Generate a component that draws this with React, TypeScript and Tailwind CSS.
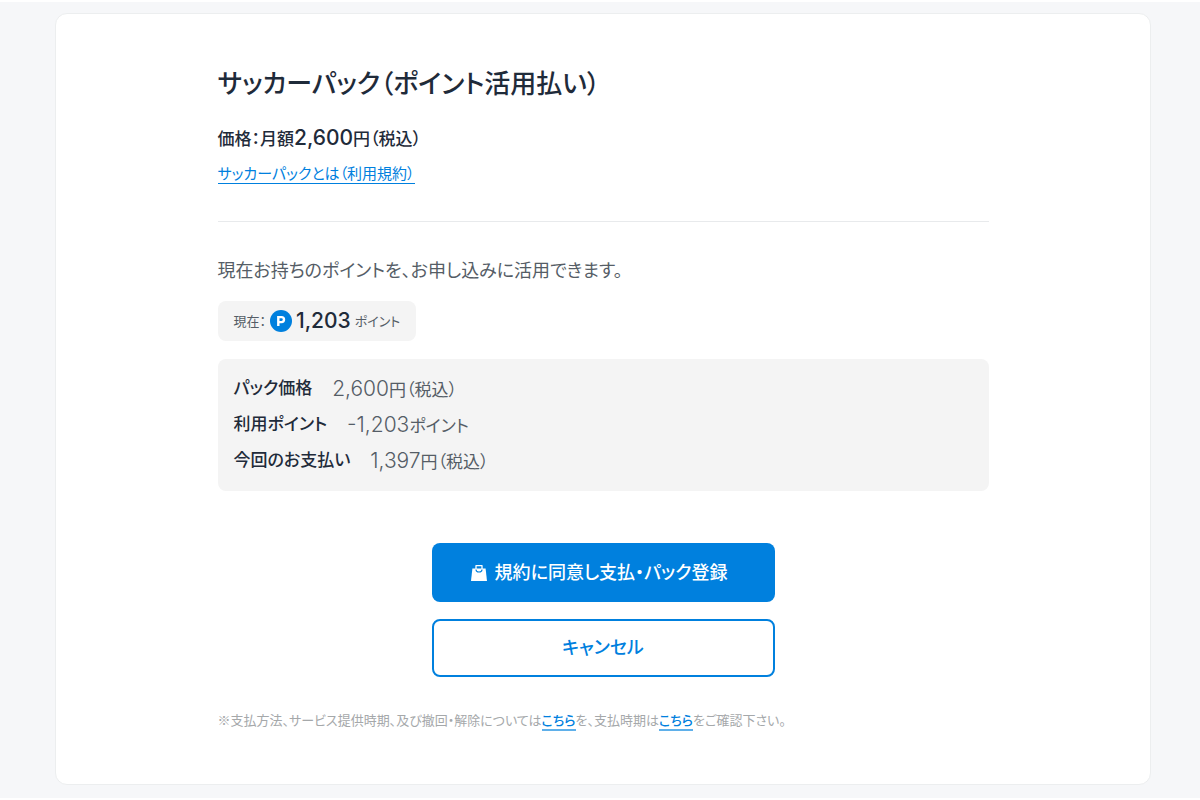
function ShoppingBagIcon() {
  return (
    <svg viewBox="0 0 16 18" className="mt-1 h-[18px] w-4" aria-hidden="true">
      <path
        d="M5 5V1.6h6V5"
        fill="none"
        stroke="#fff"
        strokeWidth="1.3"
        strokeLinejoin="round"
      />
      <path d="M1.4 4.6h13.2L16 17H0z" fill="#fff" />
      <path
        d="M5 5.4c0 1.6 1.1 2.6 3 2.6s3-1 3-2.6"
        fill="none"
        stroke="#0080de"
        strokeWidth="1.1"
      />
    </svg>
  );
}

function PointIcon() {
  return (
    <svg viewBox="0 0 22 22" className="size-[22px]" aria-hidden="true">
      <circle cx="11" cy="11" r="11" fill="#0080de" />
      <path
        d="M8.3 16V7.1h3.2a2.5 2.5 0 0 1 0 5H8.3"
        fill="none"
        stroke="#fff"
        strokeWidth="2.4"
      />
    </svg>
  );
}

const breakdown = [
  { label: "パック価格", amount: "2,600", unit: "円（税込）" },
  { label: "利用ポイント", amount: "-1,203", unit: "ポイント" },
  { label: "今回のお支払い", amount: "1,397", unit: "円（税込）" },
];

export default function App() {
  return (
    <div
      lang="ja"
      className="border-t-2 border-b-3 border-white bg-[#f6f7f9] pt-[11px] pr-[49px] pb-[13px] pl-[55px] font-['Noto_Sans_CJK_JP',sans-serif] text-[#1f2b3a] [font-feature-settings:'palt']"
    >
      <main className="rounded-xl border border-[#eceeef] bg-white px-6 pt-12 pb-[52px]">
        <div className="mx-auto max-w-[771px]">
          <h1 className="text-[26px] leading-10 font-medium">
            サッカーパック（ポイント活用払い）
          </h1>

          <p className="mt-6 text-[17px] leading-6 font-medium">
            価格：月額
            <span className="font-['Inter',sans-serif] text-[21px]">2,600</span>
            円（税込）
          </p>
          <a
            href="#terms"
            className="mt-[13px] inline-block border-b border-[#0080de] text-[15px] leading-5 text-[#0080de]"
          >
            サッカーパックとは（利用規約）
          </a>

          <hr className="mt-[37px] border-[#e8eaec]" />

          <p className="mt-[35px] text-[18px] leading-6 text-[#555d66]">
            現在お持ちのポイントを、お申し込みに活用できます。
          </p>

          <div className="mt-5 inline-flex h-10 items-center gap-1 rounded-lg bg-[#f4f4f4] px-4 text-[13px] text-[#555d66]">
            <span>現在：</span>
            <PointIcon />
            <span className="font-['Inter',sans-serif] text-[21px] font-medium text-[#1f2b3a]">
              1,203
            </span>
            <span>ポイント</span>
          </div>

          <dl className="mt-[18px] rounded-lg bg-[#f4f4f4] px-4 pt-[10px] pb-[14px]">
            {breakdown.map((row) => (
              <div key={row.label} className="flex h-9 items-center gap-5">
                <dt className="text-[17px] font-medium">{row.label}</dt>
                <dd className="pt-1 text-[17px] text-[#555d66]">
                  <span className="font-['Inter',sans-serif] text-[21px] font-light">
                    {row.amount}
                  </span>
                  {row.unit}
                </dd>
              </div>
            ))}
          </dl>

          <div className="mx-auto mt-[52px] flex max-w-[343px] flex-col gap-[17px]">
            <button
              type="button"
              className="flex h-[59px] items-center justify-center gap-2 rounded-lg bg-[#0080de] pr-2 pb-[3px] text-[18px] font-medium text-white"
            >
              <ShoppingBagIcon />
              規約に同意し支払・パック登録
            </button>
            <button
              type="button"
              className="h-[58px] rounded-lg border-2 border-[#0080de] bg-white pb-[3px] text-[18px] font-medium text-[#0080de]"
            >
              キャンセル
            </button>
          </div>

          <p className="mt-[31px] text-[13px] leading-6 text-[#a5a8aa]">
            ※支払方法、サービス提供時期、及び撤回・解除については
            <a href="#payment" className="border-b-2 border-[#5fb0ea] font-medium text-[#0080de]">
              こちら
            </a>
            を、支払時期は
            <a href="#schedule" className="border-b-2 border-[#5fb0ea] font-medium text-[#0080de]">
              こちら
            </a>
            をご確認下さい。
          </p>
        </div>
      </main>
    </div>
  );
}
